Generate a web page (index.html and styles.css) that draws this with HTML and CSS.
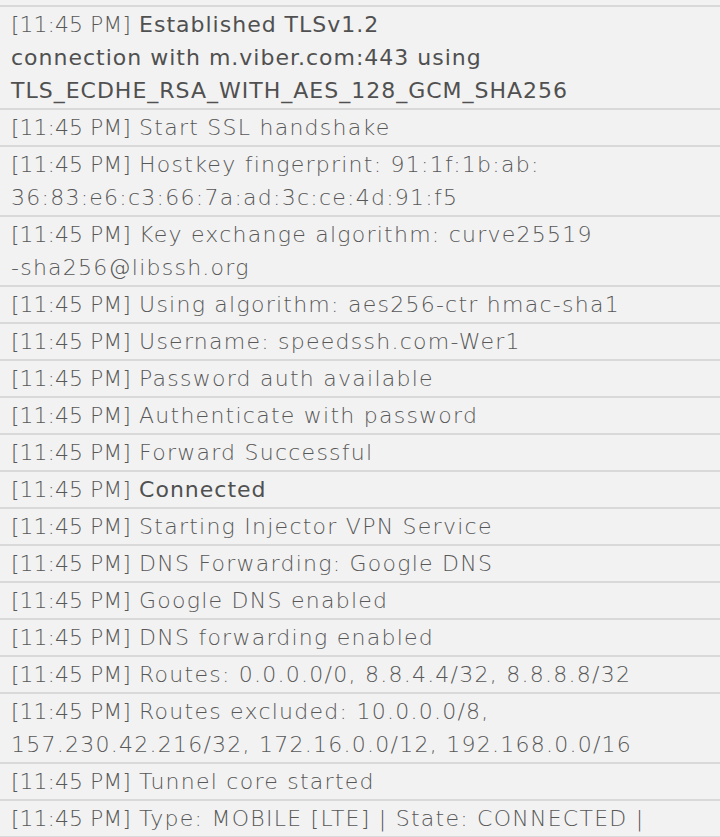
FILE: index.html
```html
<!DOCTYPE html>
<html>
<head>
<meta charset="utf-8">
<link rel="stylesheet" href="styles.css">
</head>
<body>
<div class="log">
  <div class="row"><span class="ts">[11:45 PM]</span> <b class="strong">Established TLSv1.2<br>connection with m.viber.com:443 using<br>TLS_ECDHE_RSA_WITH_AES_128_GCM_SHA256</b></div>
  <div class="row"><span class="ts">[11:45 PM]</span> Start SSL handshake</div>
  <div class="row"><span class="ts">[11:45 PM]</span> Hostkey fingerprint: 91:1f:1b:ab:<br>36:83:e6:c3:66:7a:ad:3c:ce:4d:91:f5</div>
  <div class="row"><span class="ts">[11:45 PM]</span> Key exchange algorithm: curve25519<br>-sha256@libssh.org</div>
  <div class="row"><span class="ts">[11:45 PM]</span> Using algorithm: aes256-ctr hmac-sha1</div>
  <div class="row"><span class="ts">[11:45 PM]</span> Username: speedssh.com-Wer1</div>
  <div class="row"><span class="ts">[11:45 PM]</span> Password auth available</div>
  <div class="row"><span class="ts">[11:45 PM]</span> Authenticate with password</div>
  <div class="row"><span class="ts">[11:45 PM]</span> Forward Successful</div>
  <div class="row"><span class="ts">[11:45 PM]</span> <b class="strong">Connected</b></div>
  <div class="row"><span class="ts">[11:45 PM]</span> Starting Injector VPN Service</div>
  <div class="row"><span class="ts">[11:45 PM]</span> DNS Forwarding: Google DNS</div>
  <div class="row"><span class="ts">[11:45 PM]</span> Google DNS enabled</div>
  <div class="row"><span class="ts">[11:45 PM]</span> DNS forwarding enabled</div>
  <div class="row"><span class="ts">[11:45 PM]</span> Routes: 0.0.0.0/0, 8.8.4.4/32, 8.8.8.8/32</div>
  <div class="row"><span class="ts">[11:45 PM]</span> Routes excluded: 10.0.0.0/8,<br>157.230.42.216/32, 172.16.0.0/12, 192.168.0.0/16</div>
  <div class="row"><span class="ts">[11:45 PM]</span> Tunnel core started</div>
  <div class="row"><span class="ts">[11:45 PM]</span> Type: MOBILE [LTE] | State: CONNECTED |</div>
</div>
</body>
</html>
```

FILE: styles.css
```css
html, body {
  margin: 0;
  padding: 0;
  background: #f2f2f2;
}
body {
  width: 720px;
  height: 837px;
  overflow: hidden;
}
.log {
  padding-top: 5px;
}
.log::before {
  content: "";
  display: block;
  height: 2px;
  background: #d9d9d9;
}
.row {
  font-family: "DejaVu Sans", sans-serif;
  font-weight: 200;
  font-size: 22px;
  letter-spacing: 1.25px;
  line-height: 33px;
  color: #585858;
  padding: 1px 0 1px 11px;
  border-bottom: 2px solid #d9d9d9;
  white-space: nowrap;
}
.ts {
  letter-spacing: 0;
}
.strong {
  font-weight: 400;
  letter-spacing: 1px;
  color: #505050;
}
```
